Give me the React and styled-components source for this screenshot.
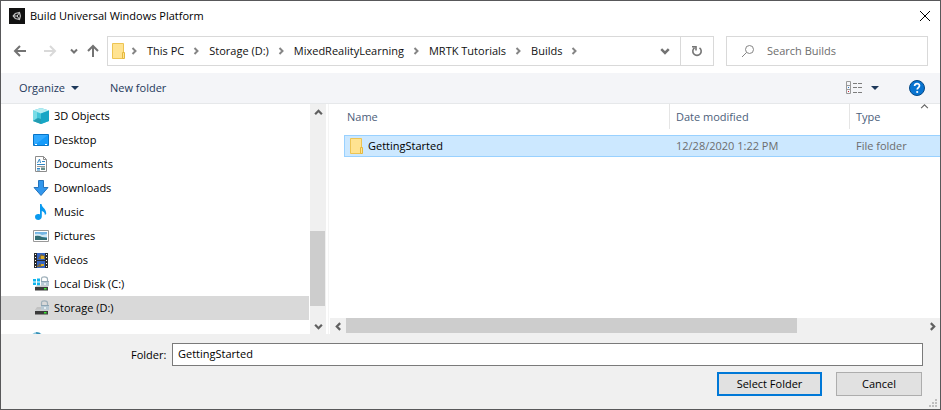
import React, { useState } from "react";
import styled, { createGlobalStyle } from "styled-components";

const GlobalStyle = createGlobalStyle`
  * { box-sizing: border-box; }
  body {
    margin: 0;
    background: #ffffff;
    color: #000000;
    font-family: "Open Sans", "Noto Sans", sans-serif;
    font-size: 11px;
    line-height: 16px;
  }
  button, input { font: inherit; color: inherit; }
  svg { display: block; flex: none; }
`;

const Dialog = styled.main`
  display: flex;
  flex-direction: column;
  height: 100vh;
  min-height: 320px;
  overflow: hidden;
  border: 1px solid #58585a;
  background: #ffffff;
`;

const PlainButton = styled.button.attrs({ type: "button" })`
  display: flex;
  align-items: center;
  justify-content: center;
  border: 0;
  padding: 0;
  background: transparent;
`;

const TitleBar = styled.header`
  display: flex;
  align-items: center;
  flex: none;
  gap: 5px;
  height: 30px;
  padding: 0 9px 0 8px;
`;

const Title = styled.h1`
  flex: 1;
  margin: 0;
  font-size: 11px;
  font-weight: 400;
  white-space: nowrap;
`;

const NavBar = styled.div`
  display: flex;
  align-items: center;
  flex: none;
  height: 42px;
  padding: 0 12px 2px 8px;
`;

const NavButtons = styled.div`
  display: flex;
  align-items: center;
  flex: none;
`;

const NavButton = styled(PlainButton)`
  flex: none;
  width: ${(p) => p.$width}px;
  height: 24px;
  color: ${(p) => p.$color || "#737373"};
`;

const AddressBar = styled.nav`
  display: flex;
  align-items: center;
  flex: 1;
  min-width: 0;
  height: 30px;
  border: 1px solid #d9d9d9;
  padding-left: 4px;
`;

const Crumbs = styled.ol`
  display: flex;
  align-items: center;
  flex: 1;
  min-width: 0;
  margin: 0;
  padding: 0 0 0 4px;
  list-style: none;
  overflow: hidden;
`;

const Crumb = styled.li`
  display: flex;
  align-items: center;
  color: #858585;
`;

const CrumbButton = styled(PlainButton)`
  padding: 0 8px 0 9px;
  color: #111111;
  white-space: nowrap;
`;

const RefreshButton = styled(PlainButton)`
  align-self: stretch;
  width: 33px;
  border-left: 1px solid #d9d9d9;
  color: #757575;
`;

const SearchBox = styled.label`
  display: flex;
  align-items: center;
  gap: 12px;
  width: 202px;
  height: 30px;
  margin-left: 12px;
  border: 1px solid #d9d9d9;
  padding-left: 14px;
`;

const SearchInput = styled.input`
  flex: 1;
  min-width: 0;
  border: 0;
  outline: 0;
  padding: 0;
  background: transparent;
  &::placeholder { color: #6d6d6d; opacity: 1; }
`;

const Toolbar = styled.div`
  display: flex;
  align-items: center;
  flex: none;
  height: 31px;
  padding: 0 15px 0 18px;
  border-bottom: 1px solid #e6e8ea;
  background: #f4f5f8;
`;

const ToolButton = styled(PlainButton)`
  gap: 6px;
  margin-right: ${(p) => p.$after || 0}px;
  color: #1e395b;
  white-space: nowrap;
`;

const Spacer = styled.div`
  flex: 1;
`;

const Panes = styled.div`
  display: flex;
  flex: 1;
  min-height: 0;
`;

const TreePane = styled.aside`
  display: flex;
  flex: none;
  width: 328px;
  margin-right: 1px;
  padding-right: 2px;
  border-right: 1px solid #f4f4f4;
`;

const Tree = styled.ul`
  flex: 1;
  margin: 0;
  padding: 0;
  list-style: none;
  overflow: hidden;
`;

const TreeItem = styled(PlainButton)`
  justify-content: flex-start;
  gap: 5px;
  width: 100%;
  height: 24px;
  padding-left: 32px;
  background: ${(p) => (p.$selected ? "#d9d9d9" : "transparent")};
`;

const NextRoot = styled.li`
  padding: 12px 0 0 30px;
`;

const ScrollTrack = styled.div`
  display: flex;
  flex: none;
  flex-direction: ${(p) => (p.$vertical ? "column" : "row")};
  width: ${(p) => (p.$vertical ? "17px" : "auto")};
  height: ${(p) => (p.$vertical ? "auto" : "16px")};
  border-left: ${(p) => (p.$vertical ? "1px solid #ffffff" : "0")};
  background: #f0f0f0;
  color: #606060;
`;

const ScrollButton = styled(PlainButton)`
  flex: none;
  width: 16px;
  height: 16px;
`;

const ScrollThumb = styled.div`
  flex: ${(p) => p.$size};
  margin: ${(p) => (p.$vertical ? "0 1px 0 0" : "0 0 1px 0")};
  background: #cdcdcd;
`;

const ScrollSpace = styled.div`
  flex: ${(p) => p.$size};
`;

const FilePane = styled.section`
  display: flex;
  flex: 1;
  flex-direction: column;
  min-width: 0;
`;

const FileArea = styled.div`
  flex: 1;
  min-height: 0;
  padding-left: 14px;
  overflow: hidden;
`;

const FileTable = styled.table`
  width: 100%;
  table-layout: fixed;
  border-collapse: separate;
  border-spacing: 0;
`;

const HeadCell = styled.th`
  width: ${(p) => p.$width || "auto"};
  padding: 0 0 6px;
  color: #4c607a;
  font-weight: 400;
  text-align: left;
`;

const HeadLabel = styled.div`
  display: flex;
  justify-content: space-between;
  height: 25px;
  padding: 5px 11px 0 ${(p) => p.$indent}px;
  border-right: ${(p) => (p.$last ? "0" : "1px solid #e5e5e5")};
`;

const SortMark = styled.span`
  margin-top: -7px;
  color: #666666;
`;

const FileRow = styled.tr`
  background: #cce8ff;
`;

const FileCell = styled.td`
  height: 22px;
  padding: 0 0 0 ${(p) => p.$indent}px;
  border: solid #99d1ff;
  border-width: ${(p) => (p.$first ? "1px 0 1px 1px" : "1px 0")};
  color: ${(p) => (p.$first ? "#000000" : "#6d6d6d")};
  white-space: nowrap;
`;

const FileName = styled.span`
  display: flex;
  align-items: center;
  gap: 4px;
`;

const Footer = styled.footer`
  display: flex;
  flex: none;
  flex-direction: column;
  gap: 6px;
  height: 75px;
  padding-top: 9px;
  background: #f0f0f0;
`;

const FolderField = styled.div`
  display: flex;
  align-items: center;
  gap: 6px;
  padding: 0 17px 0 130px;
`;

const FolderLabel = styled.label`
  flex: none;
  width: 35px;
  white-space: nowrap;
`;

const FolderInput = styled.input`
  flex: 1;
  min-width: 0;
  height: 23px;
  border: 1px solid #7a7a7a;
  outline: 0;
  padding: 0 5px 2px;
  background: #ffffff;
`;

const Actions = styled.div`
  display: flex;
  flex: 1;
  justify-content: flex-end;
  gap: 14px;
  padding-right: 3px;
`;

const ActionButton = styled.button.attrs({ type: "button" })`
  width: ${(p) => (p.$primary ? 105 : 86)}px;
  height: 24px;
  padding: 0;
  border: ${(p) => (p.$primary ? "2px solid #0078d7" : "1px solid #adadad")};
  background: #e1e1e1;
`;

const Grip = styled.svg`
  align-self: flex-end;
  margin: 0 0 2px -7px;
`;

function Chevron({ dir = "right", size = 8, weight = 2 }) {
  const paths = {
    right: "M2.5 1L5.5 4L2.5 7",
    left: "M5.5 1L2.5 4L5.5 7",
    down: "M1 2.5L4 5.5L7 2.5",
    up: "M1 5.5L4 2.5L7 5.5",
  };
  return (
    <svg width={size} height={size} viewBox="0 0 8 8" fill="none" stroke="currentColor" strokeWidth={weight} aria-hidden="true">
      <path d={paths[dir]} />
    </svg>
  );
}

function Arrow({ dir }) {
  const paths = {
    left: "M13 7H2M7 2L2 7L7 12",
    right: "M1 7H12M7 2L12 7L7 12",
    up: "M7 13V2M2 7L7 2L12 7",
  };
  return (
    <svg width="14" height="14" fill="none" stroke="currentColor" strokeWidth="2" aria-hidden="true">
      <path d={paths[dir]} />
    </svg>
  );
}

function Caret() {
  return (
    <svg width="8" height="4" fill="#1e395b" aria-hidden="true">
      <path d="M0 0H8L4 4Z" />
    </svg>
  );
}

function FolderIcon() {
  return (
    <svg width="14" height="16" aria-hidden="true">
      <path d="M.5 .5H11.5V15.5H.5Z" fill="#ffe391" stroke="#edc453" />
      <path d="M10.5 9.5H12.5V15.5H10.5Z" fill="#ffe391" stroke="#e5b93e" />
    </svg>
  );
}

function UnityIcon() {
  return (
    <svg width="16" height="16" aria-hidden="true">
      <path d="M0 0H16V16H0Z" fill="#111111" />
      <path d="M4.2 8L6.3 5.5L10.5 4.5L11.4 8L10.5 11.5L6.3 10.5Z" fill="none" stroke="#bdbdbd" strokeWidth="1.2" />
      <path d="M4 8H8.2L10.2 5M8.2 8L10.2 11" fill="none" stroke="#d0d0d0" />
    </svg>
  );
}

function Drive({ windows }) {
  return (
    <>
      <path d="M8.5 5V3Q8.5 .8 11.5 .8Q14.5 .8 14.5 3V5" fill="none" stroke="#9fb0ba" strokeWidth="1.2" />
      <path d="M8 5H16V10H8Z" fill="#b7c9d4" />
      <path d="M8 5H16V6H8Z" fill="#8da5b4" />
      <path d="M11 7H13V9H11Z" fill="#e5edf1" />
      {windows ? (
        <path d="M0 3H3V5.5H0ZM4 2.5H7V5.5H4ZM0 6.5H3V9H0ZM4 6.5H7V9.5H4Z" fill="#10b5ee" />
      ) : (
        <path d="M4 7H8V10H2Z" fill="#c2c2c2" />
      )}
      <path d="M3.5 9.5H14L15.5 11H2Z" fill="#c9cdcf" />
      <path d="M2 11H15V14.5H2Z" fill="#3b3b3b" />
      <path d="M11 12H13.5V13.5H11Z" fill="#3bea32" />
    </>
  );
}

const treeDrawings = {
  objects: (
    <>
      <path d="M0 2.5L8 0L16 2.5V13L8 16L0 13Z" fill="#42c5d9" />
      <path d="M0 2.5L8 0L16 2.5L8 5.5Z" fill="#b5edf1" />
      <path d="M0 2.5L4 4V10L0 13Z" fill="#79dce6" />
      <path d="M8 5.5L16 2.5V13L8 16Z" fill="#17a6c5" />
      <path d="M0 13L5 10L8 11V16Z" fill="#239cb2" />
    </>
  ),
  desktop: (
    <>
      <path d="M.5 2.5H15.5V13.5H.5Z" fill="#159bfa" stroke="#0774c7" />
      <path d="M1 3H15L3 12H1Z" fill="#31aaff" />
      <path d="M2 12.5H4M12 12.5H14" stroke="#ffffff" />
    </>
  ),
  documents: (
    <>
      <path d="M2.5 .5H10.5L13.5 3.5V15.5H2.5Z" fill="#ffffff" stroke="#8c8c8c" />
      <path d="M10.5 .5V3.5H13.5" fill="none" stroke="#8c8c8c" />
      <path d="M4.5 7L6.5 3L7.5 7M9 5.5H12M4 8.5H12M4 12.5H7M4 14H7" fill="none" stroke="#3387c4" />
      <path d="M4 10.5H12" stroke="#999999" />
      <path d="M8 11.5H12V14H8Z" fill="#668c88" />
    </>
  ),
  downloads: <path d="M5.5 .5H10.5V7.5H15L8 15.5L1 7.5H5.5Z" fill="#3297ed" stroke="#2574bc" />,
  music: <path d="M7 0H8.5C9 4 13.5 4.5 13.2 10L11.8 11C12 8.5 10.5 7.5 8.8 7V12.5C8.8 17 2 17 2 13C2 10.2 5 9.6 7 10.5Z" fill="#0a9aef" />,
  pictures: (
    <>
      <path d="M.5 2.5H15.5V13.5H.5Z" fill="#ffffff" stroke="#999999" />
      <path d="M2 4H14V12H2Z" fill="#75b6e4" />
      <path d="M2 6Q6 5 9 7L14 6V9H2Z" fill="#d1e8f4" />
      <path d="M2 8Q6 7 9 9L14 10V12H2Z" fill="#326e75" />
    </>
  ),
  videos: (
    <>
      <path d="M1 1H15V16H1Z" fill="#292b2d" />
      <path d="M4 1H12V8H4ZM4 9H12V16H4Z" fill="#3565c3" />
      <path d="M5 7L8 2L12 4V7ZM4 14L7 11L9 15H4Z" fill="#7b6843" />
      <path d="M8 4H11V7H8ZM8 12H11V14H8Z" fill="#d8ad29" />
      <path d="M2.5 2V16M13.5 2V16" stroke="#ffffff" strokeDasharray="1 2" />
    </>
  ),
  windowsDrive: <Drive windows />,
  drive: <Drive />,
  network: (
    <>
      <circle cx="6" cy="6" r="6" fill="#8bc8df" />
      <path d="M5 0L9 1L10 4L6 5Z" fill="#358eb4" />
    </>
  ),
};

function TreeIcon({ name }) {
  return (
    <svg width="16" height="16" aria-hidden="true">
      {treeDrawings[name]}
    </svg>
  );
}

const crumbs = ["This PC", "Storage (D:)", "MixedRealityLearning", "MRTK Tutorials", "Builds"];

const places = [
  ["3D Objects", "objects"],
  ["Desktop", "desktop"],
  ["Documents", "documents"],
  ["Downloads", "downloads"],
  ["Music", "music"],
  ["Pictures", "pictures"],
  ["Videos", "videos"],
  ["Local Disk (C:)", "windowsDrive"],
  ["Storage (D:)", "drive"],
];

export default function App() {
  const [folder, setFolder] = useState("GettingStarted");
  const [place, setPlace] = useState("Storage (D:)");

  return (
    <>
      <GlobalStyle />
      <Dialog>
        <TitleBar>
          <UnityIcon />
          <Title>Build Universal Windows Platform</Title>
          <PlainButton aria-label="Close">
            <svg width="12" height="12" stroke="#000000" aria-hidden="true">
              <path d="M1 1L11 11M11 1L1 11" />
            </svg>
          </PlainButton>
        </TitleBar>

        <NavBar>
          <NavButtons>
            <NavButton $width={22} aria-label="Back"><Arrow dir="left" /></NavButton>
            <NavButton $width={38} $color="#d9d9d9" aria-label="Forward"><Arrow dir="right" /></NavButton>
            <NavButton $width={10} aria-label="Recent locations"><Chevron dir="down" /></NavButton>
            <NavButton $width={28} aria-label="Up"><Arrow dir="up" /></NavButton>
          </NavButtons>
          <AddressBar aria-label="Address">
            <FolderIcon />
            <Crumbs>
              <Crumb><Chevron /></Crumb>
              {crumbs.map((name) => (
                <Crumb key={name}>
                  <CrumbButton>{name}</CrumbButton>
                  <Chevron />
                </Crumb>
              ))}
            </Crumbs>
            <NavButton $width={31} aria-label="Previous locations"><Chevron dir="down" size={10} /></NavButton>
            <RefreshButton aria-label="Refresh">
              <svg width="12" height="14" fill="none" stroke="currentColor" strokeWidth="1.6" aria-hidden="true">
                <path d="M8.5 3.8A4.2 4.2 0 1 1 3.5 3.8M1 2.8H5V6.5" />
              </svg>
            </RefreshButton>
          </AddressBar>
          <SearchBox>
            <svg width="14" height="14" fill="none" stroke="#858585" aria-hidden="true">
              <circle cx="8.5" cy="5.5" r="4" />
              <path d="M5.5 8.5L1 13" />
            </svg>
            <SearchInput type="text" placeholder="Search Builds" aria-label="Search Builds" />
          </SearchBox>
        </NavBar>

        <Toolbar>
          <ToolButton $after={31}>Organize <Caret /></ToolButton>
          <ToolButton>New folder</ToolButton>
          <Spacer />
          <ToolButton $after={30} aria-label="Change your view">
            <svg width="20" height="14" fill="none" aria-hidden="true">
              <path d="M1.5 .5H5.5V12.5H1.5ZM1.5 4.5H5.5M1.5 8.5H5.5" stroke="#999999" />
              <path d="M8 2.5H12M13 2.5H17M8 6.5H12M13 6.5H17M8 11.5H12M13 11.5H17" stroke="#7d7d7d" />
              <path d="M3 6.5H4" stroke="#2478cc" />
              <path d="M3 10.5H4" stroke="#ce2635" />
            </svg>
            <Caret />
          </ToolButton>
          <PlainButton aria-label="Help">
            <svg width="16" height="16" aria-hidden="true">
              <circle cx="8" cy="8" r="7.5" fill="#0874d1" stroke="#064986" />
              <path d="M5.6 6C5.6 2.8 10.5 3 10.5 5.8C10.5 7.5 8.2 7.7 8.2 9.5" fill="none" stroke="#ffffff" strokeWidth="1.7" />
              <circle cx="8.2" cy="12" r="1.1" fill="#ffffff" />
            </svg>
          </PlainButton>
        </Toolbar>

        <Panes>
          <TreePane>
            <Tree aria-label="Folders">
              {places.map(([name, icon]) => (
                <li key={name}>
                  <TreeItem $selected={place === name} onClick={() => setPlace(name)}>
                    <TreeIcon name={icon} />
                    {name}
                  </TreeItem>
                </li>
              ))}
              <NextRoot><TreeIcon name="network" /></NextRoot>
            </Tree>
            <ScrollTrack $vertical>
              <ScrollButton aria-label="Scroll up"><Chevron dir="up" size={9} /></ScrollButton>
              <ScrollSpace $size={111} />
              <ScrollThumb $size={75} $vertical />
              <ScrollSpace $size={12} />
              <ScrollButton aria-label="Scroll down"><Chevron dir="down" size={9} /></ScrollButton>
            </ScrollTrack>
          </TreePane>

          <FilePane>
            <FileArea>
              <FileTable>
                <thead>
                  <tr>
                    <HeadCell><HeadLabel $indent={3}>Name</HeadLabel></HeadCell>
                    <HeadCell $width="180px"><HeadLabel $indent={6}>Date modified</HeadLabel></HeadCell>
                    <HeadCell $width="90px">
                      <HeadLabel $indent={6} $last>
                        Type
                        <SortMark><Chevron dir="up" size={9} weight={1} /></SortMark>
                      </HeadLabel>
                    </HeadCell>
                  </tr>
                </thead>
                <tbody>
                  <FileRow>
                    <FileCell $first $indent={5}>
                      <FileName><FolderIcon />GettingStarted</FileName>
                    </FileCell>
                    <FileCell $indent={6}>12/28/2020 1:22 PM</FileCell>
                    <FileCell $indent={6}>File folder</FileCell>
                  </FileRow>
                </tbody>
              </FileTable>
            </FileArea>
            <ScrollTrack>
              <ScrollButton aria-label="Scroll left"><Chevron dir="left" size={9} /></ScrollButton>
              <ScrollThumb $size={450} />
              <ScrollSpace $size={127} />
              <ScrollButton aria-label="Scroll right"><Chevron size={9} /></ScrollButton>
            </ScrollTrack>
          </FilePane>
        </Panes>

        <Footer>
          <FolderField>
            <FolderLabel htmlFor="folder">Folder:</FolderLabel>
            <FolderInput id="folder" type="text" value={folder} onChange={(e) => setFolder(e.target.value)} />
          </FolderField>
          <Actions>
            <ActionButton $primary>Select Folder</ActionButton>
            <ActionButton>Cancel</ActionButton>
            <Grip width="8" height="8" fill="#bfbfbf" aria-hidden="true">
              <path d="M6 0H8V2H6ZM3 3H5V5H3ZM6 3H8V5H6ZM0 6H2V8H0ZM3 6H5V8H3ZM6 6H8V8H6Z" />
            </Grip>
          </Actions>
        </Footer>
      </Dialog>
    </>
  );
}
